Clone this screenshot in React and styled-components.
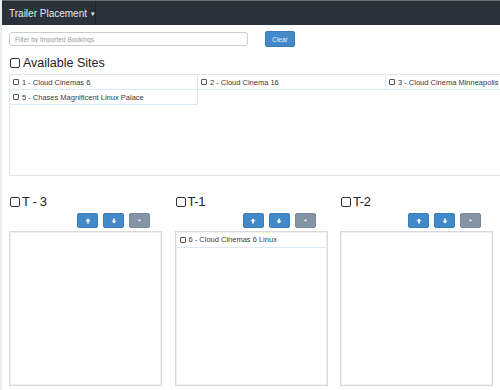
import React from 'react'
import styled, { createGlobalStyle } from 'styled-components'

const GlobalStyle = createGlobalStyle`
  html, body {
    margin: 0;
    padding: 0;
    background: #fff;
    font-family: "Liberation Sans", Arial, sans-serif;
    color: #333;
    overflow: hidden;
  }
`

const Page = styled.div`
  width: 500px;
  height: 390px;
  box-sizing: border-box;
  border-left: 2px solid #e9eef3;
  overflow: hidden;
`

const Navbar = styled.nav`
  height: 25px;
  background: #2a323c;
  border-top: 1px solid #6b6f74;
  box-sizing: border-box;
  display: flex;
  margin-left: -2px;
`

const Brand = styled.div`
  display: flex;
  align-items: center;
  gap: 4px;
  width: 96px;
  box-sizing: border-box;
  padding: 0 0 0 9px;
  border-right: 1px solid #1d232a;
  color: #e8eaec;
  font-size: 10px;
  white-space: nowrap;

  span {
    font-size: 7px;
    margin-top: 1px;
  }
`

const Content = styled.div`
  padding: 6px 0 0 7px;
`

const FilterRow = styled.div`
  display: flex;
  align-items: center;
  height: 16px;
`

const FilterInput = styled.input`
  width: 239px;
  height: 14px;
  box-sizing: border-box;
  border: 1px solid #c9ccd0;
  border-radius: 3px;
  font-family: "Liberation Sans", Arial, sans-serif;
  font-size: 6.5px;
  padding: 0 5px;
  outline: none;

  &::placeholder {
    color: #9a9a9a;
  }
`

const ClearButton = styled.button`
  margin-left: 17px;
  width: 30px;
  height: 16px;
  border: 1px solid #3a7bb8;
  border-radius: 2px;
  background: #4289c9;
  color: #e6f0fa;
  font-family: "Liberation Sans", Arial, sans-serif;
  font-size: 6.5px;
  padding: 0;
`

const Heading = styled.label`
  display: flex;
  align-items: center;
  gap: ${p => (p.$small ? '2px' : '3px')};
  font-size: ${p => (p.$small ? '13px' : '12.5px')};
  line-height: 14px;
  height: 14px;
  color: #222;
  margin-top: ${p => p.$top || 0}px;
  letter-spacing: ${p => (p.$small ? '-0.4px' : '0')};
`

const BigBox = styled.span`
  width: 10px;
  height: 10px;
  box-sizing: border-box;
  border: 1.3px solid #333;
  border-radius: 2px;
  display: inline-block;
  margin-left: 1px;
`

const SitesBox = styled.div`
  margin-top: 4px;
  width: 500px;
  height: 102px;
  box-sizing: border-box;
  border-top: 1px solid #e2e5e8;
  border-bottom: 1.5px solid #e2e5e8;
  border-left: 1px solid #e2e5e8;
  display: grid;
  grid-template-columns: repeat(3, 188px);
  grid-auto-rows: 15px;
  align-content: start;
`

const SiteCell = styled.div`
  display: flex;
  align-items: center;
  gap: 3px;
  padding-left: 3px;
  box-sizing: border-box;
  border-right: 1.5px solid #dce9f2;
  border-bottom: 1.5px solid #dce9f2;
  font-size: 7.5px;
  color: #3a3a3a;
  white-space: nowrap;
`

const SmallBox = styled.span`
  width: 6px;
  height: 6px;
  box-sizing: border-box;
  border: 1px solid #555;
  border-radius: 1px;
  display: inline-block;
  flex: none;
`

const Columns = styled.div`
  display: grid;
  grid-template-columns: repeat(3, 153px);
  column-gap: 12.5px;
  margin-top: 19px;
`

const Column = styled.div`
  display: flex;
  flex-direction: column;
`

const ButtonRow = styled.div`
  display: flex;
  justify-content: flex-end;
  gap: 5px;
  padding-right: 12px;
  margin-top: 4px;
`

const IconButton = styled.button`
  width: 21px;
  height: 15px;
  padding: 0;
  border: 1px solid ${p => (p.$muted ? '#7a889b' : '#3a7bb8')};
  border-radius: 2px;
  background: ${p => (p.$muted ? '#8593a7' : '#4289c9')};
  display: flex;
  align-items: center;
  justify-content: center;
`

const ListBox = styled.div`
  margin-top: 3px;
  height: 155px;
  box-sizing: border-box;
  border: 1px solid #d9d9d9;
  box-shadow: inset 0 0 0 1px #f1f1f1;
`

const ListItem = styled.div`
  display: flex;
  align-items: center;
  gap: 3px;
  height: 15px;
  padding-left: 4px;
  border-bottom: 1.5px solid #dce9f2;
  font-size: 7.5px;
  color: #3a3a3a;
`

const UpIcon = () => (
  <svg width="6" height="6" viewBox="0 0 6 6">
    <path d="M3 0.5 L5.6 3.2 H3.8 V5.6 H2.2 V3.2 H0.4 Z" fill="#fff" />
  </svg>
)

const DownIcon = () => (
  <svg width="6" height="6" viewBox="0 0 6 6">
    <path d="M3 5.5 L5.6 2.8 H3.8 V0.4 H2.2 V2.8 H0.4 Z" fill="#fff" />
  </svg>
)

const MinusIcon = () => (
  <svg width="5" height="3" viewBox="0 0 5 3">
    <path d="M0.5 0.8 H4.5 L2.5 2.4 Z" fill="#fff" />
  </svg>
)

const sites = [
  '1 - Cloud Cinemas 6',
  '2 - Cloud Cinema 16',
  '3 - Cloud Cinema Minneapolis',
  '5 - Chases Magnificent Linux Palace',
]

const trailers = [
  { name: 'T - 3', items: [] },
  { name: 'T-1', items: ['6 - Cloud Cinemas 6 Linux'] },
  { name: 'T-2', items: [] },
]

const App = () => {
  return (
    <Page>
      <GlobalStyle />
      <Navbar>
        <Brand>
          Trailer Placement <span>▾</span>
        </Brand>
      </Navbar>
      <Content>
        <FilterRow>
          <FilterInput placeholder="Filter by Imported Bookings" />
          <ClearButton>Clear</ClearButton>
        </FilterRow>
        <Heading $top={9}>
          <BigBox />
          Available Sites
        </Heading>
        <SitesBox>
          {sites.map(s => (
            <SiteCell key={s}>
              <SmallBox />
              {s}
            </SiteCell>
          ))}
        </SitesBox>
        <Columns>
          {trailers.map(t => (
            <Column key={t.name}>
              <Heading $small>
                <BigBox />
                {t.name}
              </Heading>
              <ButtonRow>
                <IconButton><UpIcon /></IconButton>
                <IconButton><DownIcon /></IconButton>
                <IconButton $muted><MinusIcon /></IconButton>
              </ButtonRow>
              <ListBox>
                {t.items.map(i => (
                  <ListItem key={i}>
                    <SmallBox />
                    {i}
                  </ListItem>
                ))}
              </ListBox>
            </Column>
          ))}
        </Columns>
      </Content>
    </Page>
  )
}

export default App
